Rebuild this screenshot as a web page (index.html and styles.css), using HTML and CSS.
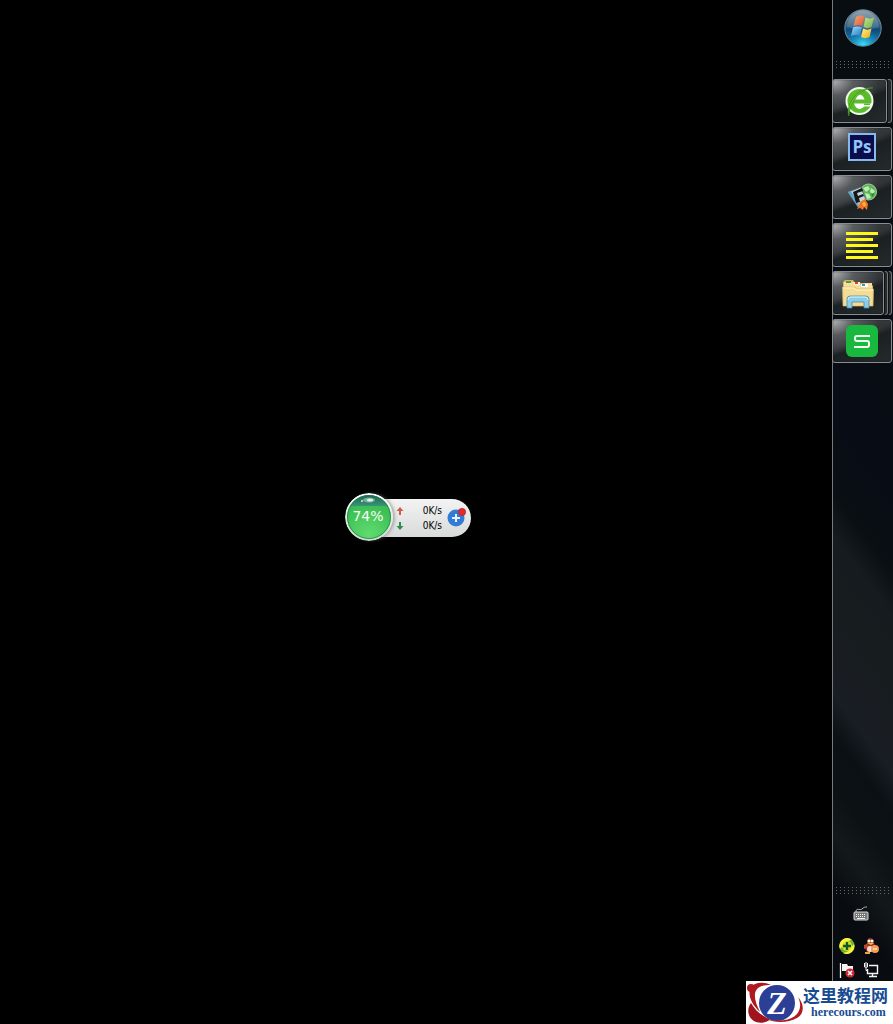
FILE: index.html
```html
<!DOCTYPE html>
<html lang="zh-CN">
<head>
<meta charset="utf-8">
<title>Desktop</title>
<link rel="stylesheet" href="styles.css">
</head>
<body>
<main class="desktop">
  <section class="monitor" aria-label="Network monitor">
    <div class="orb">
      <svg class="orb-shine" viewBox="0 0 48 48" aria-hidden="true">
        <defs>
          <linearGradient id="rim" x1="0" y1="0" x2="0" y2="1"><stop offset="0" stop-color="#fff"/><stop offset="1" stop-color="#c8ddce"/></linearGradient>
          <linearGradient id="lid" x1="0" y1="0" x2="0" y2="1"><stop offset="0" stop-color="#17594c"/><stop offset="1" stop-color="#399577"/></linearGradient>
          <radialGradient id="liquid" cx=".5" cy=".9" r=".8"><stop offset="0" stop-color="#60dc70"/><stop offset="1" stop-color="#36b94f"/></radialGradient>
          <clipPath id="ball"><circle cx="24" cy="24" r="22"/></clipPath>
        </defs>
        <circle cx="24" cy="24" r="24" fill="url(#rim)"/>
        <circle cx="24" cy="24" r="22" fill="url(#liquid)"/>
        <rect width="48" height="13" fill="url(#lid)" clip-path="url(#ball)"/>
        <circle cx="24" cy="24" r="21.5" fill="none" stroke="#247a48" opacity=".7"/>
        <ellipse cx="24" cy="7" rx="6" ry="2.6" fill="#d5f0e5" opacity=".45"/>
        <ellipse cx="25" cy="7" rx="3" ry="1.5" fill="#fff" opacity=".8"/>
        <circle cx="17" cy="8" r="1" fill="#d5f0e5"/>
      </svg>
      <span class="percent">74%</span>
    </div>
    <div class="speeds">
      <div class="speed">
        <svg class="arrow" viewBox="0 0 8 8" aria-hidden="true"><path d="M4 0l3.500 4H5v4H3V4H.5z" fill="#cf5d45"/></svg>
        <span>0K/s</span>
      </div>
      <div class="speed">
        <svg class="arrow" viewBox="0 0 8 8" aria-hidden="true"><path d="M4 8l3.500-4H5V0H3v4H.5z" fill="#2d8d50"/></svg>
        <span>0K/s</span>
      </div>
    </div>
    <button class="boost" aria-label="Boost">
      <svg viewBox="0 0 20 20" aria-hidden="true">
        <circle cx="9" cy="11" r="8.500" fill="#337cd6"/>
        <path d="M9 7v8M5 11h8" stroke="#e5f2ff" stroke-width="2"/>
        <circle cx="15" cy="5" r="3.7" fill="#df2b2d" stroke="#a52932" stroke-width=".6"/>
      </svg>
    </button>
  </section>

  <aside class="taskbar">
    <button class="start" aria-label="Start">
      <svg viewBox="0 0 38 38" aria-hidden="true">
        <defs>
          <linearGradient id="sky" x1="0" y1="0" x2="0" y2="1"><stop offset="0" stop-color="#8797a3"/><stop offset=".45" stop-color="#2c5c80"/><stop offset=".55" stop-color="#0e4a7c"/><stop offset="1" stop-color="#1592c0"/></linearGradient>
          <radialGradient id="glow" cx=".5" cy="1" r=".5"><stop offset="0" stop-color="#42e6ff"/><stop offset="1" stop-color="#1688c2" stop-opacity="0"/></radialGradient>
          <linearGradient id="red" x1="0" y1="0" x2="1" y2="1"><stop offset="0" stop-color="#f69b59"/><stop offset="1" stop-color="#d63b17"/></linearGradient>
          <linearGradient id="grn" x1="0" y1="0" x2="1" y2="1"><stop offset="0" stop-color="#c4df79"/><stop offset="1" stop-color="#56a52c"/></linearGradient>
          <linearGradient id="blu" x1="0" y1="0" x2="1" y2="1"><stop offset="0" stop-color="#9bdcfb"/><stop offset="1" stop-color="#2277bf"/></linearGradient>
          <linearGradient id="yel" x1="0" y1="0" x2="1" y2="1"><stop offset="0" stop-color="#fff08b"/><stop offset="1" stop-color="#f2ab12"/></linearGradient>
        </defs>
        <circle cx="19" cy="19" r="18.2" fill="url(#sky)" stroke="#6c8d9f"/>
        <circle cx="19" cy="19" r="17.5" fill="url(#glow)"/>
        <path d="M12 8c3-2 5.500-2 8.500-.5L18.500 17c-3-1.500-6-1.500-9 0z" fill="url(#red)"/>
        <path d="M21.500 8.500c3 1.500 5.500 1.500 8.500 0L27.500 18c-3 1.500-5 1.500-8 0z" fill="url(#grn)"/>
        <path d="M9 18.500c3-1.500 6-1.500 9 0L16 27c-3-1.500-6-1.500-9 0z" fill="url(#blu)"/>
        <path d="M19 19.500c3 1.500 5.500 1.500 8.500 0l-2 8.500c-3 1.500-5.500 1.500-8.500 0z" fill="url(#yel)"/>
        <path d="M3 18A16 16 0 0 1 35 18C28 21 11 20 3 18z" fill="#fff" opacity=".14"/>
      </svg>
    </button>
    <div class="grip"></div>

    <nav class="tasks" aria-label="Running programs">
      <div class="slot">
        <button class="task" aria-label="Browser">
          <svg class="icon" viewBox="0 0 32 32" aria-hidden="true">
            <circle cx="15.500" cy="16" r="13" fill="#5cbb2b" stroke="#eef9e8" stroke-width="2"/>
            <path d="M10 14.500c1-2 3-5 5.500-5s4.500 3 5 5z" fill="#fff"/>
            <path d="M10 18.500h18v3h-8c-1 1.500-3 2.500-4.500 2.500-2.500 0-4.500-2.500-5.500-5.500z" fill="#fff"/>
            <path d="M20 18.500h6v1.500h-6z" fill="#5cbb2b"/>
            <path d="M5 31C2 25 7 13 15 7c6-4 12-5 14-4-7 0-14 5-18 11-4 6-6 11-6 17z" fill="#65c92e" stroke="#338d17" stroke-width=".7"/>
          </svg>
        </button>
        <span class="stack"></span>
      </div>
      <div class="slot">
        <button class="task" aria-label="Photoshop"><span class="ps">Ps</span></button>
      </div>
      <div class="slot">
        <button class="task" aria-label="File transfer">
          <svg class="icon" viewBox="0 0 32 32" aria-hidden="true">
            <circle cx="22.500" cy="11" r="8" fill="#5cb557" stroke="#a5c9a0"/>
            <path d="M17 7l5-2 2 3-4 3zM25 7l4 3-2 3-3-2zM19 12l4 1 2 4-4 1z" fill="#bdedb2"/>
            <path d="M25 13l3-1-1 4z" fill="#257f30"/>
            <path d="M2 11l13-5 5 13-8 7z" fill="#c5d3d9" stroke="#58707e"/>
            <path d="M2 11l3-1 8 14-1 2z" fill="#62a9ca"/>
            <path d="M10 22L7 11l9-4 1 3-6 2 1 3 5-2 1 2-5 2 1 4z" fill="#15181a"/>
            <path d="M14 21l5-3 3 5-1 6-3-3-1 3-3-2-3 1 2-4z" fill="#ee7528"/>
            <path d="M16 22l3-1 1 3-2 2z" fill="#ffb43e"/>
          </svg>
        </button>
      </div>
      <div class="slot">
        <button class="task" aria-label="Text editor">
          <svg class="icon" viewBox="0 0 32 32" aria-hidden="true"><path d="M0 4.500h32M0 10.500h27M0 16.500h32M0 22.500h27M0 28.500h32" stroke="#fff719" stroke-width="3"/></svg>
        </button>
      </div>
      <div class="slot">
        <button class="task" aria-label="File Explorer">
          <svg class="icon" viewBox="0 0 32 32" aria-hidden="true">
            <path d="M1 5l2-2h8l2 3h15l3 3v16H1z" fill="#d8b765"/>
            <path d="M2 5h10l1 3h7l2-2h8v19H2z" fill="#f6df9c"/>
            <path d="M4 4h5v2H4z" fill="#45a43c"/><path d="M12 5h6v3h-6z" fill="#fff2cd"/><path d="M13 5h3v2h-3z" fill="#d64235"/><path d="M19 7h7v3h-7z" fill="#fff"/><path d="M20 7h3v2h-3z" fill="#3c98bd"/>
            <path d="M.5 10H13l2 2h16.500L31 29H1z" fill="#f4dc93" stroke="#d4b568" stroke-width=".7"/>
            <path d="M1 11h11l2 2h17" fill="none" stroke="#fff6cf"/>
            <path d="M5 31V22q0-3 3-3h16q3 0 3 3v9h-5v-6H10v6z" fill="#8dcbe7" stroke="#458eb4" stroke-width=".8"/>
            <path d="M6 23q0-3 3-3h14q3 0 3 3" fill="none" stroke="#d6f3ff"/>
          </svg>
        </button>
        <span class="stack"></span><span class="stack"></span>
      </div>
      <div class="slot">
        <button class="task" aria-label="WPS Spreadsheets">
          <svg class="icon" viewBox="0 0 32 32" aria-hidden="true">
            <rect width="32" height="32" rx="6" fill="#19b83f"/>
            <path d="M24 11H11q-2 0-2 2v1q0 2 2 2h10q2 0 2 2v2q0 2-2 2H8" fill="none" stroke="#f3fff3" stroke-width="2"/>
          </svg>
        </button>
      </div>
    </nav>

    <div class="grip grip-tray"></div>
    <div class="tray">
      <button class="tray-item keyboard" aria-label="Keyboard">
        <svg viewBox="0 0 16 16" aria-hidden="true">
          <path d="M3 6C3 1 7 5 9 3s3-2 5-2" fill="none" stroke="#b9bdbf"/>
          <rect x="1" y="6" width="14" height="8" rx="1" fill="#777" stroke="#d7d9da"/>
          <path d="M3 8.500h10M3 10.500h10" stroke="#f0f0f0" stroke-dasharray="1 1"/><path d="M4 12.500h8" stroke="#f0f0f0"/>
        </svg>
      </button>
      <button class="tray-item" aria-label="Security">
        <svg viewBox="0 0 16 16" aria-hidden="true">
          <circle cx="8" cy="8" r="7.700" fill="#6fb52a"/><path d="M1 11A7.700 7.700 0 0 1 13 2C9 3 6 3 4 7 3 9 2 10 1 11zM15 6a7.700 7.700 0 0 1-11 9c5-1 6-2 8-6 2-1 2-2 3-3z" fill="#fff238"/>
          <circle cx="8" cy="8" r="5" fill="#d9e535"/>
          <path d="M8 4v8M4 8h8" stroke="#125e22" stroke-width="2.400"/>
        </svg>
      </button>
      <button class="tray-item" aria-label="QQ">
        <svg viewBox="0 0 16 16" aria-hidden="true">
          <path d="M4 5q0-5 3-5 4 0 4 5l2 4-1 5H4L2 10z" fill="#97331e"/>
          <path d="M1 7l3-1 1 3-4 2z" fill="#c34630"/>
          <circle cx="6" cy="3" r="1.500" fill="#fff"/><circle cx="9" cy="3" r="1.500" fill="#fff"/>
          <path d="M4 5h7l-3 2z" fill="#f6bb36"/><path d="M4 8q4 2 8-1v3l-6 1z" fill="#de3d2c"/>
          <ellipse cx="7" cy="11" rx="3" ry="3" fill="#f8dfd5"/>
          <circle cx="12" cy="11" r="4" fill="#f49b56"/><path d="M10 11h4" stroke="#ffe7ae" stroke-width="1.500"/>
          <path d="M2 14h5v2H2z" fill="#e8a63d"/>
        </svg>
      </button>
      <button class="tray-item" aria-label="Action Center">
        <svg viewBox="0 0 16 16" aria-hidden="true">
          <path d="M1.500 1v15" stroke="#fff" stroke-width="1.300"/><path d="M3 2h5l1 2h5v7H9l-1-2H3z" fill="#f4f4f4"/>
          <circle cx="11" cy="11" r="4.600" fill="#cd2733"/><path d="M9 9l4 4m0-4l-4 4" stroke="#fff" stroke-width="1.500"/>
        </svg>
      </button>
      <button class="tray-item" aria-label="Network">
        <svg viewBox="0 0 16 16" aria-hidden="true">
          <path d="M6 3.500h8.500v8h-10V7M9.500 12v2M6 14.500h8" fill="none" stroke="#f4f4f4" stroke-width="1.400"/>
          <path d="M1.500 1v4h3V1M3 0v4M3 5v3.500h2" fill="none" stroke="#f4f4f4"/>
        </svg>
      </button>
    </div>
  </aside>

  <footer class="brand">
    <svg class="brand-mark" viewBox="0 0 57 43" role="img" aria-label="Z">
      <path d="M25 4C16 0 8 2 5 6C1 13 5 23 14 31C9 21 7 13 11 8C14 5 18 4 25 4z" fill="#b0191f"/>
      <circle cx="5" cy="7" r="4" fill="#b0191f"/>
      <circle cx="31" cy="22" r="18" fill="#2b3f96"/>
      <text x="31" y="33" text-anchor="middle" class="brand-letter">Z</text>
      <path d="M5 22C0 28 2 38 10 41C16 43 22 41 24 38C15 35 9 29 5 22z" fill="#a0151d"/>
      <path d="M20 38C32 41 45 40 51 33C55 28 55 22 52 16C59 24 58 33 51 37C42 42 29 42 20 38z" fill="#b0191f"/>
    </svg>
    <div class="brand-copy"><span class="brand-name">这里教程网</span><span class="brand-site">herecours.com</span></div>
  </footer>
</main>
</body>
</html>
```
FILE: styles.css
```css
* { box-sizing: border-box; }
body { margin: 0; background: #000; font-family: "Noto Sans", sans-serif; }
button { padding: 0; border: 0; background: none; font: inherit; }
svg { display: block; }
.desktop {
  position: relative;
  display: flex;
  justify-content: flex-end;
  min-height: 100vh;
  overflow: hidden;
}
.taskbar {
  display: flex;
  flex-direction: column;
  width: 61px;
  padding: 9px 0 46px;
  border-left: 1px solid #777b7e;
  background: linear-gradient(233deg, #080d11 0, #080d15 300px, #090f13 345px, #151b1e 370px, #171c1f 410px, #191d24 465px, #0a1014 490px, #0c1114 520px, #13181b 550px, #080c10 582px, #080c10 100%);
}
.start { align-self: center; width: 38px; height: 38px; }
.start svg { width: 38px; height: 38px; }
.grip {
  height: 9px;
  margin: 13px 3px 10px;
  background: linear-gradient(90deg, #63686c 1px, transparent 1px) 0 0 / 4px 3px;
  mask: linear-gradient(transparent 1px, #000 1px, #000 2px, transparent 2px) 0 0 / 4px 3px;
}
.tasks { display: flex; flex-direction: column; gap: 4px; margin-left: -1px; padding-right: 1px; }
.slot { display: flex; height: 44px; }
.task {
  display: flex;
  flex: 1;
  align-items: center;
  justify-content: center;
  border: 1px solid #8b8e90;
  border-radius: 3px;
  background: radial-gradient(ellipse 46px 34px at 0 0, #b0b2b3, #6b6e7099 45%, transparent 100%), linear-gradient(155deg, #45494b 0, #303437 44%, #1b2023 54%, #252a2d 100%);
  box-shadow: inset 0 0 1px #000;
}
.stack {
  width: 4px;
  border: 1px solid #74787a;
  border-left-color: #111;
  border-radius: 0 3px 3px 0;
  background: #252a2d;
}
.slot .stack:only-of-type { width: 5px; }
.icon { width: 32px; height: 32px; }
.ps {
  width: 28px;
  height: 28px;
  margin-bottom: 4px;
  border: 2px solid #85baf1;
  background: #0b0c4b;
  color: #91c6fa;
  font: bold 17px/24px "Open Sans", sans-serif;
}
.grip-tray { margin-top: auto; margin-bottom: 11px; }
.tray { display: grid; grid-template-columns: 16px 16px; gap: 8px; justify-content: center; padding-right: 9px; }
.tray-item, .tray-item svg { width: 16px; height: 16px; }
.keyboard { grid-column: 1 / 3; justify-self: center; margin: 0 0 8px 4px; }
.monitor {
  position: absolute;
  top: 493px;
  left: 345px;
  display: flex;
  align-items: center;
  padding-right: 4px;
}
.monitor::before {
  content: "";
  position: absolute;
  inset: 6px 0 4px 24px;
  border-radius: 0 19px 19px 0;
  background: linear-gradient(#f3f3f3, #d9dada);
}
.monitor > * { position: relative; }
.orb { display: grid; place-items: center; width: 48px; height: 48px; }
.orb > * { grid-area: 1 / 1; }
.orb-shine { width: 48px; height: 48px; border-radius: 50%; box-shadow: 2px 0 3px #6667; }
.percent { z-index: 1; padding: 0 2px 2px 0; color: #f5fff4; font: 14px/16px "DejaVu Sans", "Noto Sans", sans-serif; }
.speeds { width: 49px; padding: 2px 0 0 3px; }
.speed { display: flex; align-items: center; justify-content: space-between; height: 15px; color: #000; font: 10px/15px "DejaVu Sans Condensed", "DejaVu Sans", sans-serif; }
.arrow { width: 8px; height: 8px; }
.boost { margin-left: 5px; }
.boost svg { width: 20px; height: 20px; }
.brand {
  position: absolute;
  right: 0;
  bottom: 0;
  display: flex;
  width: 147px;
  height: 43px;
  background: #fff;
  color: #174c91;
}
.brand-mark { flex: none; width: 57px; height: 43px; }
.brand-letter { font: italic bold 32px "Liberation Serif", serif; fill: #fff; }
.brand-copy { display: flex; flex: 1; flex-direction: column; align-items: center; padding: 4px 5px 0 0; white-space: nowrap; }
.brand-name { font: bold 17px/20px "Noto Sans CJK SC", sans-serif; }
.brand-site { padding-left: 6px; font: bold 12px/14px "Liberation Serif", serif; }
```
